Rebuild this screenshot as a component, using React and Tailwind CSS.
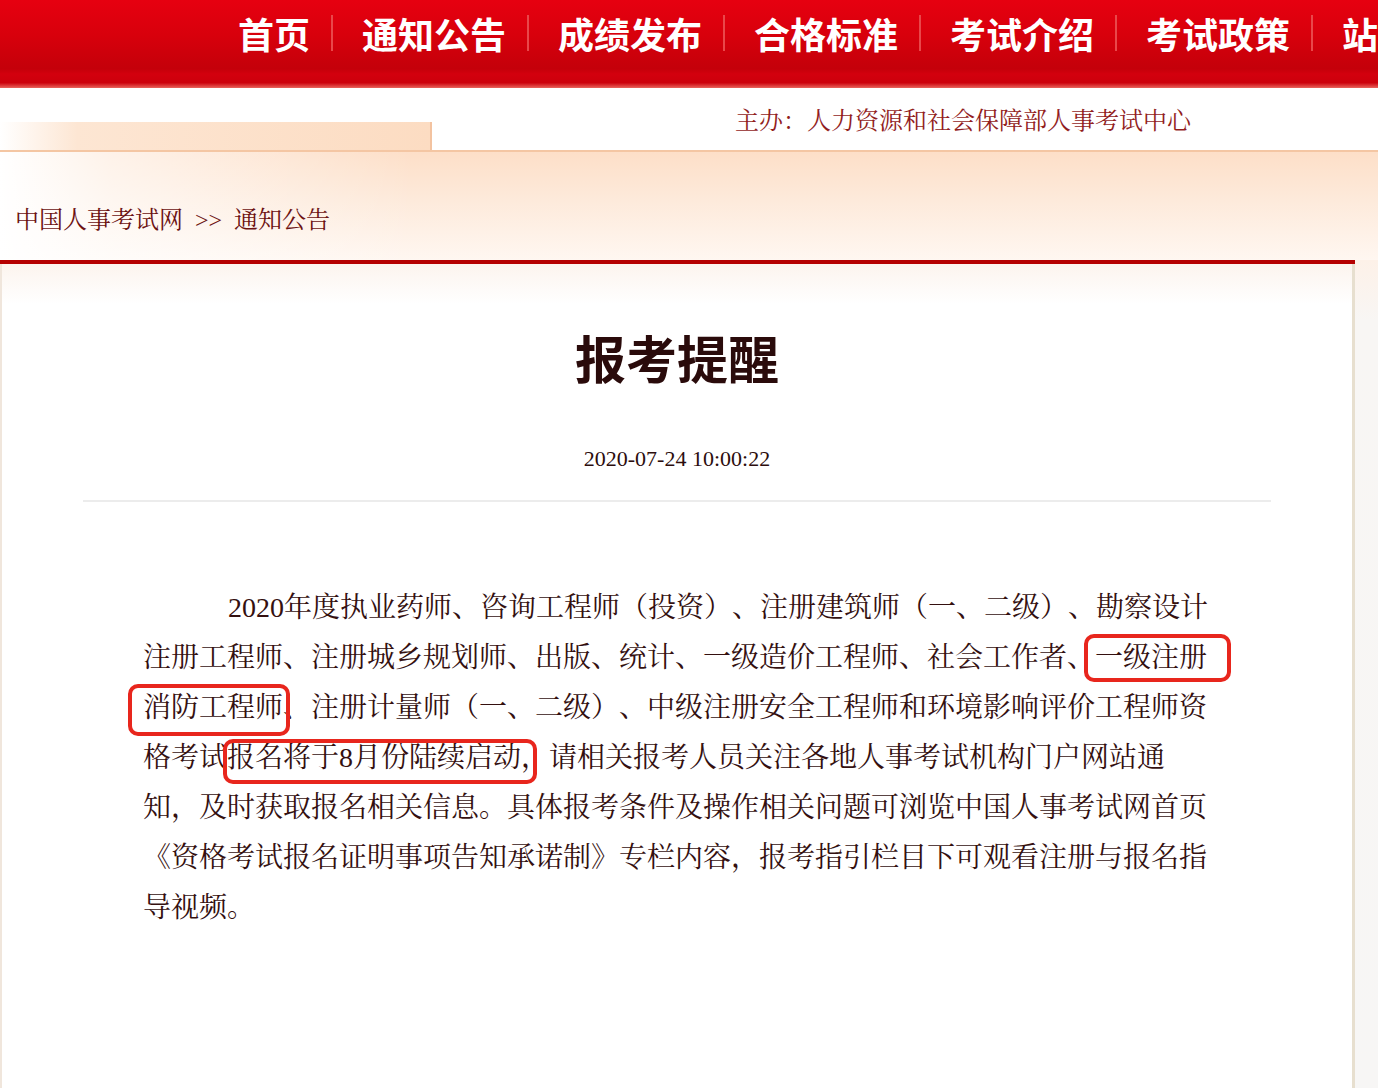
import React from 'react';

const serif = "font-['Liberation_Serif','Noto_Serif_CJK_SC','Noto_Sans_CJK_SC',serif]";
const sans = "font-['Noto_Sans_CJK_SC','Noto_Sans',sans-serif]";

const navItems = ['首页', '通知公告', '成绩发布', '合格标准', '考试介绍', '考试政策', '站点导航'];

// red rounded frame drawn over a phrase (annotation)
const Mark = ({ children, frame }) => (
  <span className="relative inline-block">
    {children}
    <span className={`pointer-events-none absolute rounded-[10px] border-[4px] border-[#e8261d] ${frame}`} />
  </span>
);

const App = () => {
  return (
    <div className={`w-[1378px] h-[1088px] overflow-hidden bg-white [text-spacing-trim:space-all] ${serif}`}>
      {/* top nav */}
      <header className="h-[88px] bg-[linear-gradient(180deg,#e60010_0%,#d8000c_40%,#c4000a_78%,#d3000e_84%,#cc000c_94%,#e9635c_100%)] overflow-hidden">
        <nav className={`flex items-center pl-[238px] pt-[15px] whitespace-nowrap ${sans}`}>
          {navItems.map((item, i) => (
            <div key={item} className="flex items-center">
              <span className="text-[36px] leading-[36px] font-bold text-white">{item}</span>
              {i < navItems.length - 1 && (
                <span className="ml-[21px] mr-[29px] h-[36px] w-[2px] bg-[#e9474a]" />
              )}
            </div>
          ))}
        </nav>
      </header>

      {/* sponsor band */}
      <div className="flex h-[62px] bg-white">
        <div className="flex w-[432px] shrink-0 flex-col justify-end">
          <div className="h-[28px] border-r-2 border-[#f3c3a0] bg-[linear-gradient(90deg,#ffffff_0%,#fde6d3_18%,#fcdcc2_100%)]" />
        </div>
        <div className="flex-1 pl-[303px] pt-[19px]">
          <span className="text-[24px] leading-[28px] text-[#921d1d]">主办：人力资源和社会保障部人事考试中心</span>
        </div>
      </div>
      <div className="h-[2px] bg-[#f4c6a3]" />

      {/* breadcrumb */}
      <div className="h-[108px] bg-[linear-gradient(180deg,#fddfc8_0%,#fdeadb_45%,#fff7f1_100%)]">
        <div className="h-full bg-[linear-gradient(90deg,#ffffff_0%,rgba(255,255,255,0.6)_8%,rgba(255,255,255,0)_30%)] pl-[15px] pt-[56px]">
          <div className="text-[24px] leading-[24px] text-[#6c1111]">
            中国人事考试网<span className="mx-[12px]">&gt;&gt;</span>通知公告
          </div>
        </div>
      </div>

      {/* article */}
      <div className="flex">
        <div className="w-[1355px] shrink-0">
          <div className="h-[4px] bg-[#b50000]" />
          <div className="h-[824px] border-l-2 border-r-[3px] border-l-[#f0e6dc] border-r-[#e7dfcf] bg-[linear-gradient(180deg,#fcf4ee_0px,#ffffff_40px)]">
            <h1 className={`pt-[63px] text-center text-[51px] leading-[60px] font-bold text-[#2a0b0b] ${sans}`}>报考提醒</h1>
            <div className="mt-[60px] text-center text-[22px] leading-[24px] text-[#2c0d0d]">2020-07-24 10:00:22</div>
            <div className="mx-[81px] mt-[29px] h-[2px] bg-[#ececec]" />

            <div className="mt-[81px] pl-[141px] text-[28px] leading-[50px] text-[#341010] whitespace-nowrap">
              <div className="pl-[85px]">2020年度执业药师、咨询工程师（投资）、注册建筑师（一、二级）、勘察设计</div>
              <div>
                注册工程师、注册城乡规划师、出版、统计、一级造价工程师、社会工作者、
                <Mark frame="-left-[11px] -right-[24px] top-[1px] bottom-[1px]">一级注册</Mark>
              </div>
              <div>
                <Mark frame="-left-[15px] -right-[7px] top-[1px] -bottom-[3px]">消防工程师</Mark>
                、注册计量师（一、二级）、中级注册安全工程师和环境影响评价工程师资
              </div>
              <div>
                格考试
                <Mark frame="-left-[4px] right-[12px] top-[6px] -bottom-[1px]">报名将于8月份陆续启动，</Mark>
                请相关报考人员关注各地人事考试机构门户网站通
              </div>
              <div>知，及时获取报名相关信息。具体报考条件及操作相关问题可浏览中国人事考试网首页</div>
              <div>《资格考试报名证明事项告知承诺制》专栏内容，报考指引栏目下可观看注册与报名指</div>
              <div>导视频。</div>
            </div>
          </div>
        </div>
        <div className="flex-1 bg-[linear-gradient(180deg,#fdf1e8_0px,#f8f6f4_60px,#f7f6f5_100%)]" />
      </div>
    </div>
  );
};

export default App;
